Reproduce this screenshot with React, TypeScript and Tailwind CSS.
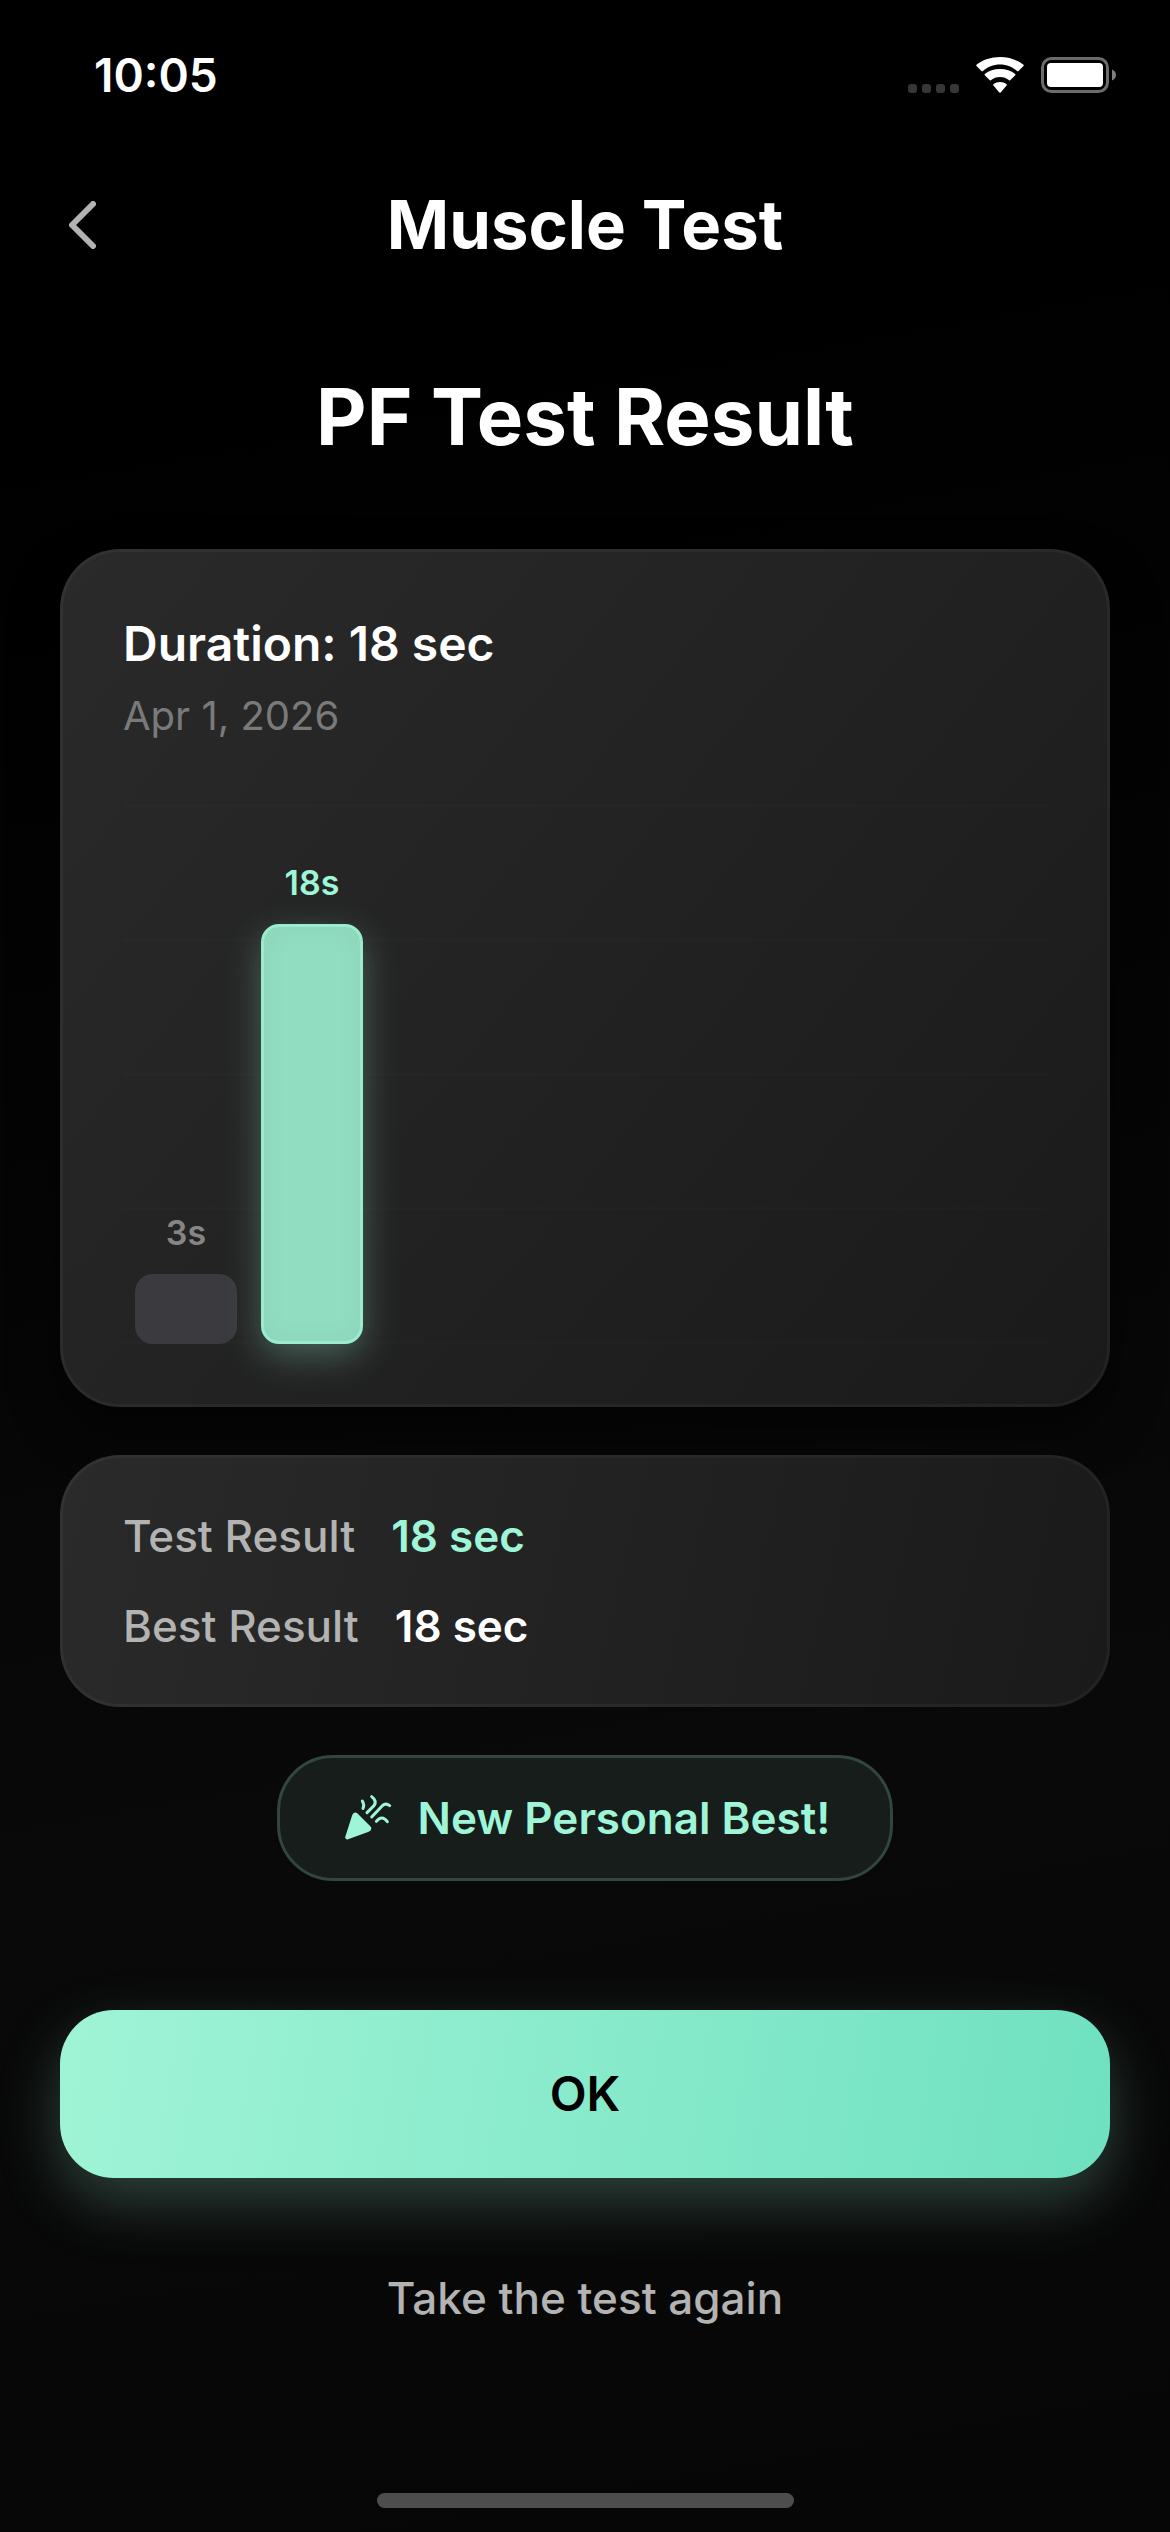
import type { ReactNode } from "react";

const results = [
  { label: "3s", seconds: 3, current: false },
  { label: "18s", seconds: 18, current: true },
];

const stats = [
  { name: "Test Result", value: "18 sec", color: "text-[#9ff5d7]" },
  { name: "Best Result", value: "18 sec", color: "text-white" },
];

const gridLines = [0, 1, 2, 3, 4];
const maxSeconds = 18;

function StatusBar() {
  return (
    <div className="flex h-[141px] items-center justify-between pt-2 pr-[54px] pl-[94px]">
      <p className="text-[46px] leading-[60px] font-semibold">10:05</p>
      <svg width="208" height="36" viewBox="0 0 208 36" aria-hidden="true">
        <g fill="#363636">
          <rect x="0" y="27" width="9" height="9" rx="3" />
          <rect x="14" y="27" width="9" height="9" rx="3" />
          <rect x="28" y="27" width="9" height="9" rx="3" />
          <rect x="42" y="27" width="9" height="9" rx="3" />
        </g>
        <g fill="#fff">
          <path d="M92 7.5c6.700 0 12.800 2.600 17.400 6.800l.9-.1 5.200-5.200c.4-.4.4-.9 0-1.300C109.300 2.800 101 0 92 0S74.700 2.800 68.500 7.700c-.4.4-.4.9 0 1.300l5.200 5.200.9.100C79.200 10.100 85.300 7.500 92 7.500z" />
          <path d="M92 20c3.500 0 6.700 1.200 9.200 3.300.3.300.7.300 1 0l5-5c.4-.4.4-.9 0-1.300-4-3.500-9.300-5-15.200-5s-11.200 1.500-15.200 5c-.4.4-.4.9 0 1.300l5 5c.3.300.7.300 1 0C85.300 21.200 88.500 20 92 20z" />
          <path d="M92 25c-2.500 0-4.800.8-6.600 2.200-.4.400-.4.900 0 1.300l5.900 6.900c.4.500 1 .5 1.400 0l5.900-6.900c.4-.4.4-.9 0-1.300C96.800 25.800 94.500 25 92 25z" />
          <rect x="139" y="6" width="56" height="24" rx="4" />
        </g>
        <rect
          x="134.500"
          y="1.500"
          width="65"
          height="33"
          rx="9"
          fill="none"
          stroke="#6b6b6b"
          strokeWidth="3"
        />
        <path d="M204 12.500c2.500 1 4 3 4 5.500s-1.500 4.500-4 5.500z" fill="#808080" />
      </svg>
    </div>
  );
}

function Card({ className, children }: { className: string; children: ReactNode }) {
  return (
    <section
      className={`rounded-[60px] border-[3px] border-white/4 bg-origin-border px-[60px] ${className}`}
    >
      {children}
    </section>
  );
}

function Chart() {
  return (
    <div className="relative mt-16 h-[540px]">
      <div className="absolute inset-0 flex flex-col justify-between">
        {gridLines.map((line) => (
          <div key={line} className="h-[3px] bg-white/[0.012]" />
        ))}
      </div>
      <div className="relative flex h-full items-end gap-6 px-3">
        {results.map((result) => (
          <div key={result.label} className="flex w-[102px] flex-col items-center">
            <p
              className={`mb-5 text-[34px] leading-[42px] font-semibold ${
                result.current ? "text-[#9ff5d7]" : "text-[#858585]"
              }`}
            >
              {result.label}
            </p>
            <div
              className={`w-full rounded-[18px] ${
                result.current
                  ? "border-[3px] border-[#9aebcf] bg-[#91ddc1] shadow-[0_12px_36px_rgba(159,245,215,0.3),inset_0_0_24px_rgba(60,110,90,0.06)]"
                  : "bg-[#3a3a3f]"
              }`}
              style={{ height: (result.seconds / maxSeconds) * 420 }}
            />
          </div>
        ))}
      </div>
    </div>
  );
}

function PartyIcon() {
  return (
    <svg width="54" height="54" viewBox="18 18 162 162" aria-hidden="true">
      <path
        d="M66 90 L105 129 Q106 132 102 134 L40 157 L61 92 Q63 88 66 90z"
        fill="#9ff5d7"
        stroke="#9ff5d7"
        strokeWidth="13"
        strokeLinejoin="round"
      />
      <g fill="none" stroke="#9ff5d7" strokeWidth="9" strokeLinecap="round" strokeLinejoin="round">
        <path d="M85 48 Q92 59 87 70" />
        <path d="M99 83 L120 62 Q130 48 113 35" />
        <path d="M113 96 L145 62 Q155 53 167 62" />
        <path d="M127 109 Q144 88 160 110" />
      </g>
    </svg>
  );
}

export default function App() {
  return (
    <div className="flex min-h-screen flex-col bg-[linear-gradient(170deg,#000_15%,#090909_70%,#060606)] font-['Inter',sans-serif] text-white">
      <StatusBar />
      <header className="grid h-[168px] grid-cols-[60px_1fr_60px] items-center px-[52px]">
        <button type="button" aria-label="Back" className="flex size-[60px] items-center justify-center">
          <svg width="28" height="48" viewBox="0 0 28 48" aria-hidden="true">
            <path
              d="M25 3 L4 24 L25 45"
              fill="none"
              stroke="#b3b3b3"
              strokeWidth="6"
              strokeLinecap="round"
              strokeLinejoin="round"
            />
          </svg>
        </button>
        <h1 className="text-center text-[67px] leading-[84px] font-bold">Muscle Test</h1>
      </header>

      <main className="flex flex-1 flex-col px-[60px] pt-[57px]">
        <h2 className="text-center text-[78px] leading-[102px] font-bold">PF Test Result</h2>

        <Card className="mt-[81px] bg-[linear-gradient(129deg,#2a2a2a,#1a1a1a)] py-[60px] shadow-[0_24px_48px_rgba(0,0,0,0.5)]">
          <p className="text-[48px] leading-[64px] font-semibold">Duration: 18 sec</p>
          <p className="mt-4 text-[40px] leading-[48px] text-[#7a7a7a]">Apr 1, 2026</p>
          <Chart />
        </Card>

        <Card className="mt-12 bg-[linear-gradient(103deg,#2a2a2a,#1a1a1a)] py-12">
          <dl className="flex flex-col gap-[30px] text-[44px] leading-[60px]">
            {stats.map((stat) => (
              <div key={stat.name} className="flex gap-9">
                <dt className="font-medium text-[#b3b3b3]">{stat.name}</dt>
                <dd className={`font-semibold ${stat.color}`}>{stat.value}</dd>
              </div>
            ))}
          </dl>
        </Card>

        <div className="mt-12 flex items-center gap-6 self-center rounded-[56px] border-[3px] border-[#314640] bg-[#171d1b] px-[60px] py-[30px]">
          <PartyIcon />
          <p className="text-[44px] leading-[60px] font-semibold text-[#9ff5d7]">New Personal Best!</p>
        </div>

        <button
          type="button"
          className="mt-[129px] h-[168px] rounded-[54px] bg-[linear-gradient(99deg,#a0f4d6,#6fe1c0)] text-[48px] leading-[60px] font-semibold text-black shadow-[0_24px_60px_rgba(159,245,215,0.25)]"
        >
          OK
        </button>
        <button
          type="button"
          className="mt-[90px] self-center text-[44px] leading-[60px] font-medium text-[#b3b3b3]"
        >
          Take the test again
        </button>
      </main>

      <div className="mb-6 h-[15px] w-[417px] self-center rounded-full bg-[#4d4d4d]" />
    </div>
  );
}
